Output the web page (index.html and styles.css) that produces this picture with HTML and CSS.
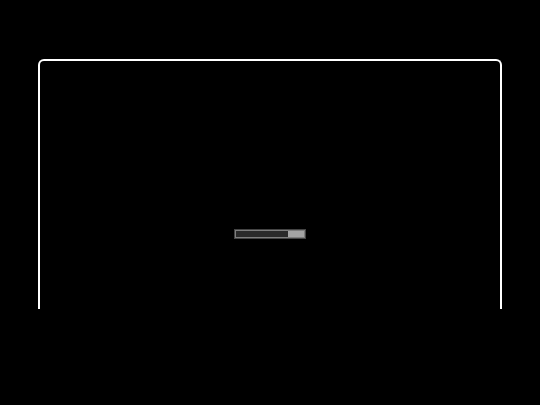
FILE: index.html
```html
<!DOCTYPE html>
<html>
<head>
<meta charset="utf-8">
<link rel="stylesheet" href="styles.css">
</head>
<body>
<div class="frame">
  <div class="progress"><div class="track"><div class="fill"></div></div></div>
</div>
</body>
</html>
```
FILE: styles.css
```css
html, body {
  margin: 0;
  padding: 0;
  background: #000;
  width: 540px;
  height: 405px;
  overflow: hidden;
  font-family: "Liberation Sans", sans-serif;
}
.frame {
  box-sizing: border-box;
  margin: 59px 38px 0;
  width: 464px;
  height: 250px;
  border: 2px solid #fff;
  border-bottom: 0;
  border-radius: 6px 6px 0 0;
  display: flex;
  justify-content: center;
  align-items: flex-start;
  padding-top: 168px;
}
.progress {
  box-sizing: border-box;
  width: 72px;
  height: 10px;
  border: 1px solid #444;
}
.track {
  box-sizing: border-box;
  height: 8px;
  border: 1px solid #7e7e7e;
  background: #a4a4a4;
  display: flex;
}
.fill {
  width: 52px;
  height: 6px;
  background: #2a2a2a;
}
```
